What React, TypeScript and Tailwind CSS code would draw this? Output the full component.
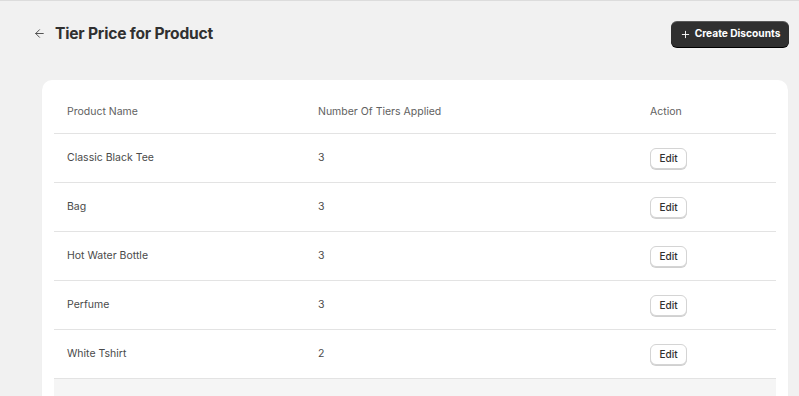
import { ArrowLeft, Plus } from "lucide-react";

const ROWS = [
  { name: "Classic Black Tee", tiers: 3 },
  { name: "Bag", tiers: 3 },
  { name: "Hot Water Bottle", tiers: 3 },
  { name: "Perfume", tiers: 3 },
  { name: "White Tshirt", tiers: 2 },
];

export default function App() {
  return (
    <div
      className="h-[396px] w-[799px] overflow-hidden border-t border-[#dcdcdc] bg-[#f1f1f1] text-[#303030]"
      style={{ fontFamily: "Inter, 'Noto Sans', sans-serif" }}
    >
      {/* Header */}
      <div className="flex h-[46px] items-end justify-between pl-[33px] pr-[10px]">
        <div className="flex items-center gap-[9px] pb-[2px]">
          <ArrowLeft className="h-[13px] w-[13px] text-[#4a4a4a]" strokeWidth={1.75} />
          <h1 className="text-[15.6px] font-bold tracking-[-0.2px] text-[#303030]">Tier Price for Product</h1>
        </div>
        <button className="flex h-[26px] w-[118px] items-center justify-center gap-[4px] rounded-[6px] bg-[#303030] text-[10.2px] font-bold text-white shadow-[0_1px_0_#000,inset_0_1px_0_rgba(255,255,255,0.2)]">
          <Plus className="h-[11px] w-[11px]" strokeWidth={2} />
          Create Discounts
        </button>
      </div>

      {/* Card */}
      <div className="ml-[42px] mr-[11px] mt-[33px] rounded-t-[10px] bg-white px-[12px] pb-[20px] shadow-[0_1px_1px_rgba(0,0,0,0.06)]">
        <div className="grid h-[54px] grid-cols-[251px_332px_1fr] items-center border-b border-[#e3e3e3] pl-[13px] pt-[10px] text-[10.5px] text-[#616161]">
          <div>Product Name</div>
          <div>Number Of Tiers Applied</div>
          <div>Action</div>
        </div>
        {ROWS.map((row) => (
          <div
            key={row.name}
            className="grid h-[49px] grid-cols-[251px_332px_1fr] items-center border-b border-[#e3e3e3] pl-[13px] text-[10.5px] text-[#4a4a4a]"
          >
            <div>{row.name}</div>
            <div>{row.tiers}</div>
            <div>
              <button className="h-[21px] w-[37px] rounded-[6px] border border-[#d4d4d4] bg-white text-[10px] font-medium text-[#303030] shadow-[0_1px_0_#d0d0d0]">
                Edit
              </button>
            </div>
          </div>
        ))}
        <div className="h-[40px] bg-[#f5f5f5]" />
      </div>
    </div>
  );
}
